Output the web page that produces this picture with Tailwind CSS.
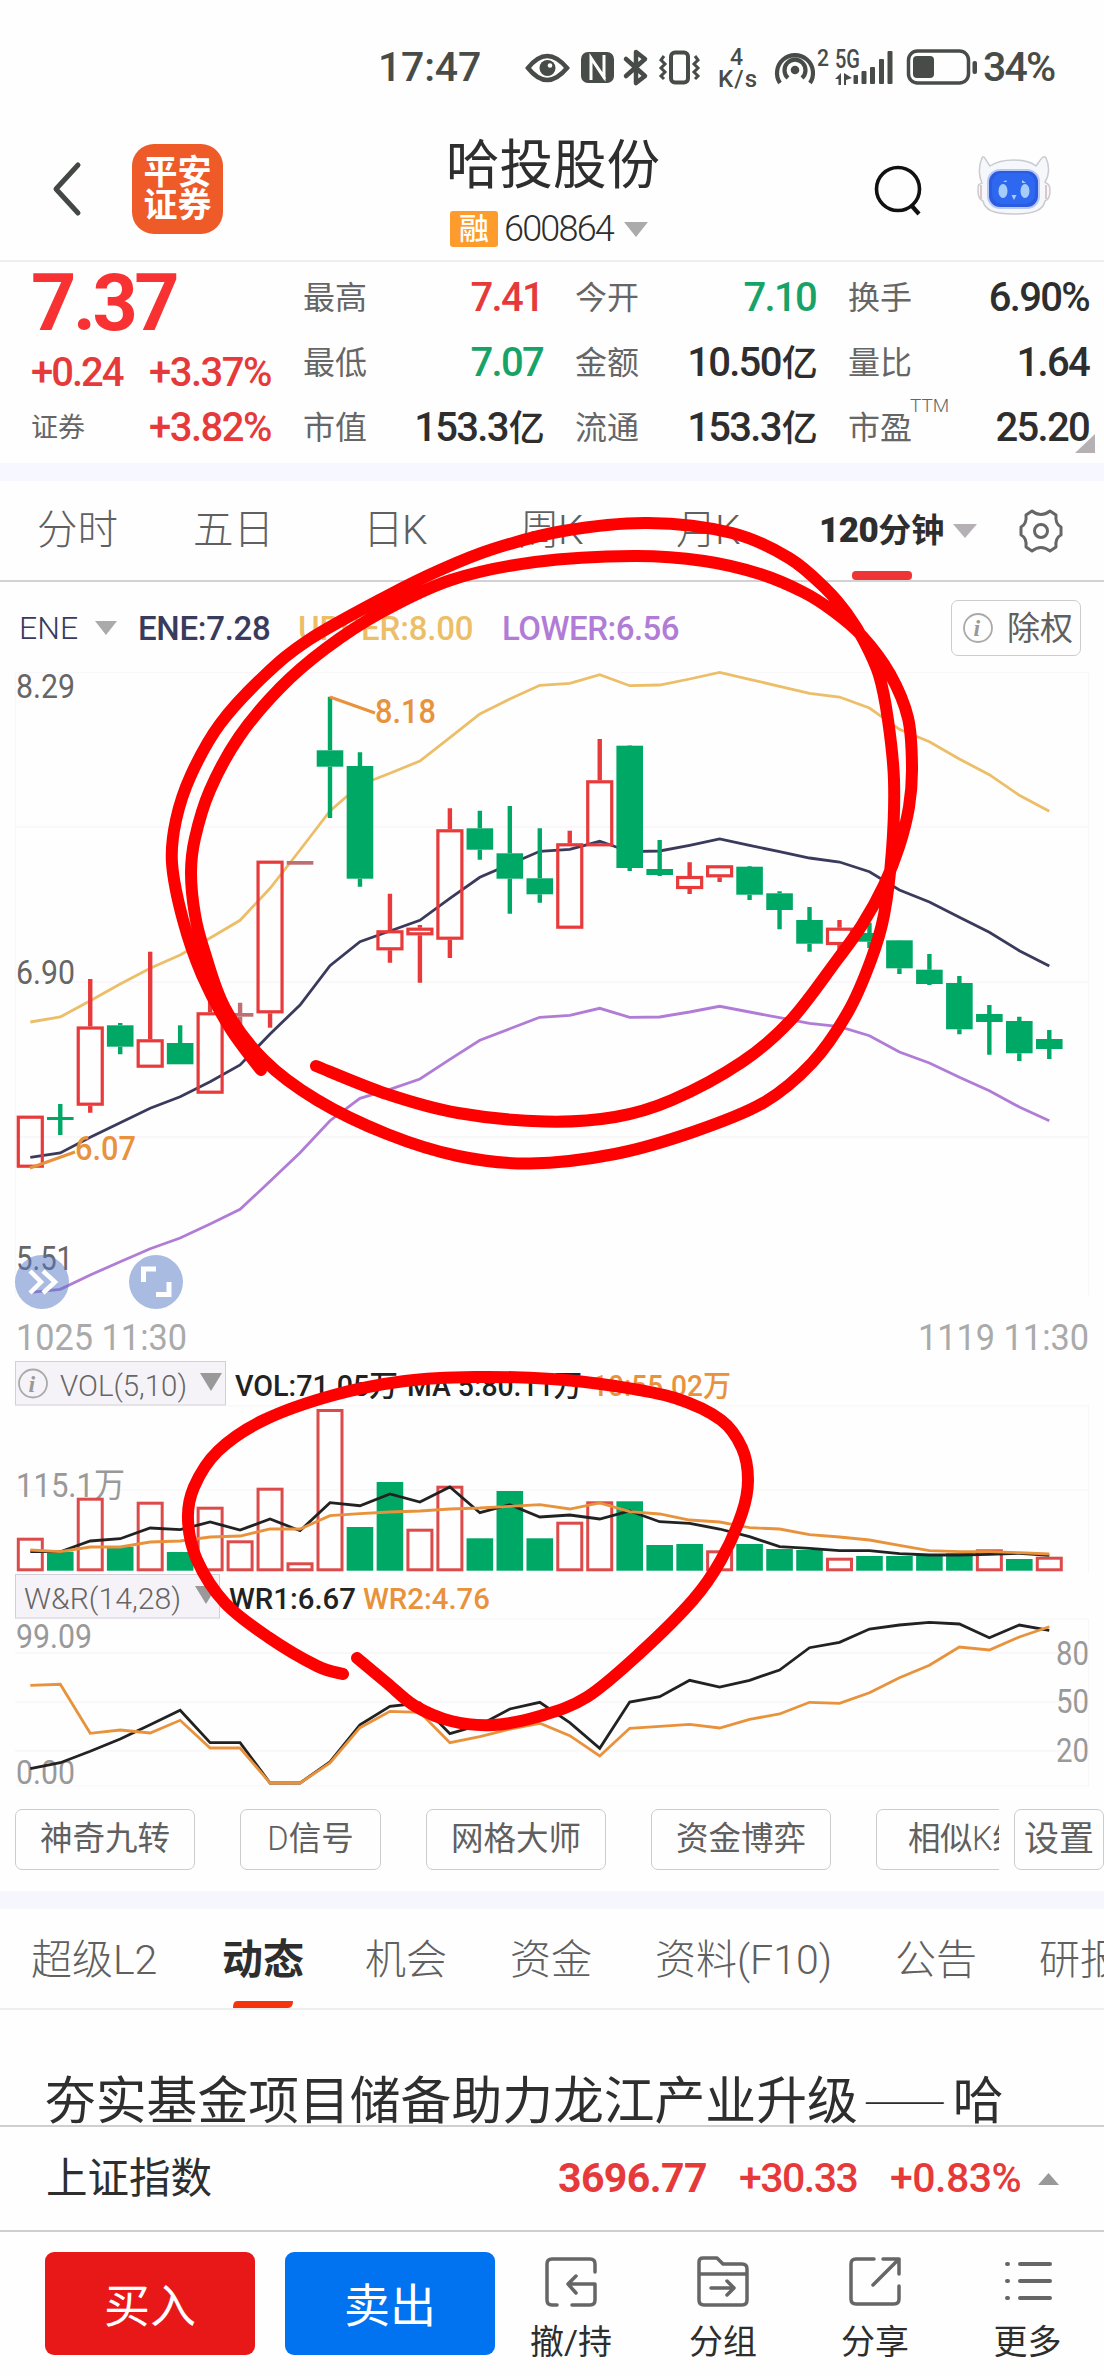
<!DOCTYPE html>
<html lang="zh-CN">
<head>
  <meta charset="UTF-8" />
  <meta name="viewport" content="width=device-width, initial-scale=1.0" />
  <title>哈投股份 600864</title>
  <script src="https://cdn.jsdelivr.net/npm/@tailwindcss/browser@4"></script>
</head>
<body class="bg-[#fefefe] text-[#2e2e2e] font-[Roboto,'Noto_Sans_CJK_SC',sans-serif] w-[1104px] h-[2376px] relative overflow-hidden flex flex-col leading-none whitespace-nowrap">

  <!-- status bar -->
  <div class="h-[134px] flex items-center pl-[378px] text-[#484c48] font-medium text-[41px] shrink-0">
    <span class="w-[142px] tracking-[-0.2px]">17:47</span>
    <svg class="w-[460px] h-[60px]" viewBox="520 36 460 60" fill="none" stroke="#484c48">
      <path d="M528 67Q547 43 567 67Q547 91 528 67Z" stroke-width="4.5"/>
      <circle cx="547.500" cy="67" r="8" fill="#484c48" stroke="none"/>
      <circle cx="550" cy="64.500" r="2.300" fill="#fff" stroke="none"/>
      <rect x="581" y="51" width="33" height="31" rx="7" fill="#484c48" stroke="none"/>
      <path d="M591 79V57l14 21M604 54v22L591 57" stroke="#fefefe" stroke-width="3"/>
      <path d="M626 58l19 17-9 7V51l9 7-19 17" stroke-width="4.500" stroke-linejoin="round" stroke-linecap="round"/>
      <rect x="671" y="51.500" width="17" height="30" rx="4" stroke-width="4"/>
      <path d="M664 55l-3 4 4 4-4 4 4 4-4 4 3 3M695 55l3 4-4 4 4 4-4 4 4 4-3 3" stroke-width="3"/>
      <path d="M780 82A18 18 0 1 1 810 82M788 77A10.500 10.500 0 1 1 802 77" stroke-width="4.200"/>
      <circle cx="795" cy="69" r="4.300" fill="#484c48" stroke="none"/>
      <g fill="#484c48" stroke="none" class="font-medium">
        <text x="730" y="64" font-size="23">4</text>
        <text x="718" y="86" font-size="24" textLength="39">K/s</text>
        <text x="817" y="65" font-size="23" textLength="12" lengthAdjust="spacingAndGlyphs">2</text>
        <text x="835" y="67" font-size="25" textLength="25" lengthAdjust="spacingAndGlyphs">5G</text>
        <path d="M835 78l6-6v12h-2.500v-6zM844 72v12h2v-5l6-2z"/>
        <rect x="853.500" y="74" width="4.500" height="9" rx="1"/>
        <rect x="861.500" y="70" width="5" height="13" rx="1"/>
        <rect x="870" y="66" width="5" height="17" rx="1"/>
        <rect x="879" y="58" width="5" height="25" rx="1"/>
        <rect x="887.500" y="50" width="5" height="33" rx="1"/>
        <rect x="913" y="55" width="21" height="22" rx="4"/>
        <rect x="972.500" y="60" width="4.500" height="13" rx="2"/>
      </g>
      <rect x="908.500" y="50" width="60" height="32" rx="9" stroke-width="3.500"/>
    </svg>
    <span class="ml-[3px] tracking-[-1.8px]">34%</span>
  </div>

  <!-- header -->
  <header class="h-[126px] flex shrink-0 relative">
    <svg class="w-[38px] h-[60px] ml-[49px] mt-[25px]" viewBox="0 0 38 60" fill="none" stroke="#444844" stroke-width="5" stroke-linecap="round" stroke-linejoin="round"><path d="M29 6L7 30L29 54"/></svg>
    <div class="ml-[45px] mt-[10px] w-[91px] h-[90px] rounded-[22px] bg-[#ee5a28] text-white font-bold text-[34px] leading-[33px] flex items-center justify-center text-center">平安<br>证券</div>
    <div class="ml-[195px] w-[270px] flex flex-col">
      <h1 class="text-[53.500px] leading-[60px] mt-[2px] pl-[28px]">哈投股份</h1>
      <div class="flex items-center h-9 mt-[15px] w-full pl-8">
        <span class="w-12 h-9 bg-[#fd9b2c] rounded-[3px] text-white text-[30px] font-medium flex items-center justify-center">融</span>
        <span class="ml-1.5 text-[36px] font-light tracking-[-1.800px]">600864</span>
        <svg class="ml-[11px] w-6 h-[15px]" viewBox="0 0 24 15"><path d="M0 0H24L12 15z" fill="#ababab"/></svg>
      </div>
    </div>
    <svg class="ml-[184px] mt-[29px] w-[52px] h-[56px] shrink-0" viewBox="872 163 52 56" fill="none" stroke="#111" stroke-width="3.600"><circle cx="898" cy="189" r="21.500"/><path d="M911 205l8 9" stroke-width="4.200"/></svg>
    <svg class="ml-[52px] mt-[18px] w-[76px] h-[66px] shrink-0" viewBox="976 152 76 66">
      <path d="M982 158c2-4 4 3 8 8 12-8 36-8 46 0 4-5 7-12 10-8 4 8 3 18-1 24l1 1c3 1 4 3 4 7s-1 10-5 11c-2 9-10 13-31 13s-29-4-31-13c-4-1-5-5-5-11s1-6 4-7c-3-6-4-16 0-25z" fill="#f6f7fa" stroke="#c9cbd2" stroke-width="1.500"/>
      <path d="M981 185v14M1046 185v14" stroke="#dcc6c8" stroke-width="2"/>
      <rect x="988" y="170" width="51" height="38" rx="12" fill="#2a5be0" stroke="#b8c9f5" stroke-width="2"/>
      <rect x="992" y="173" width="43" height="31" rx="10" fill="#2f68f0"/>
      <g fill="#a5cdf8"><ellipse cx="1003" cy="191" rx="4.500" ry="7"/><ellipse cx="1025" cy="191" rx="4.500" ry="7"/><path d="M1011.500 195h5l-2.500 5zM1003 182l3-2 1 2zM1022 180l4 3h-4z"/></g>
    </svg>
  </header>

  <!-- quote summary -->
  <section class="h-[203px] border-t-2 border-[#eeeeee] flex pl-[31px] pr-[15px] text-[40px] font-medium tracking-[-1.700px] shrink-0">
    <div class="w-[272px] shrink-0">
      <div class="text-[79px] font-bold text-[#f83232] tracking-[-3.400px] h-[81px] leading-[82px]">7.37</div>
      <div class="flex h-[56px] items-center text-[#e63a3a] mt-[2px] tracking-[-1.500px]"><span class="w-[118px] tracking-[-2px]">+0.24</span><span>+3.37%</span></div>
      <div class="flex h-[54px] items-center text-[#e63a3a] tracking-[-1.500px]"><span class="w-[118px] text-[#666] text-[27px] font-normal tracking-normal">证券</span><span>+3.82%</span></div>
    </div>
    <div id="stats" class="flex-1 grid grid-cols-[240px_241px_241px] gap-x-8 auto-rows-[65px] pt-[3px]"></div>
  </section>

  <div class="h-[18px] bg-[#f6f7ff] shrink-0"></div>

  <!-- period tabs -->
  <nav class="h-[101px] border-b-2 border-[#d2d2d2] flex items-center text-[40.500px] text-[#606060] font-light pl-[37px] shrink-0 relative">
    <span class="w-[156px]">分时</span>
    <span class="w-[170px]">五日</span>
    <span class="w-[156px] tracking-[-1.500px]">日K</span>
    <span class="w-[157px] tracking-[-1.500px]">周K</span>
    <span class="w-[143px] tracking-[-1.500px]">月K</span>
    <span class="text-[33px] font-bold text-[#2e2e2e] w-[134px]"><b class="text-[35px] tracking-[-0.500px]">120</b>分钟</span>
    <svg class="w-6 h-[14px]" viewBox="0 0 24 14"><path d="M0 0H24L12 14z" fill="#b4b0b4"/></svg>
    <svg class="ml-[42px] w-[44px] h-[46px]" viewBox="-22 -23 44 46" fill="none" stroke="#666" stroke-width="3" stroke-linejoin="round"><path d="M-9 -20Q0 -13 9 -20L15 -16Q14 -7 20 -4V4Q14 7 15 16L9 20Q0 13 -9 20L-15 16Q-14 7 -20 4V-4Q-14 -7 -15 -16Z"/><circle r="6.500"/></svg>
    <i class="absolute left-[852px] bottom-0 w-[60px] h-[9px] rounded-[4px] bg-[#ee3434]"></i>
  </nav>

  <!-- ENE indicator head -->
  <div class="h-[92px] flex items-center text-[33px] font-medium pl-[19px] pr-[23px] shrink-0">
    <span class="text-[32px] font-light text-[#3a3a5c] w-[76px]">ENE</span>
    <svg class="w-[22px] h-[14px] mr-[21px]" viewBox="0 0 22 14"><path d="M0 0H22L11 14z" fill="#aaa"/></svg>
    <span class="text-[#3a3a5c] w-[160px] tracking-[-0.300px]">ENE:7.28</span>
    <span class="text-[#ecbe68] w-[204px] tracking-[-0.200px]">UPPER:8.00</span>
    <span class="text-[#b07cd6] tracking-[-0.500px]">LOWER:6.56</span>
    <div class="ml-auto w-[130px] h-[56px] border-[1.500px] border-[#ccc] rounded-[7px] flex items-center pl-[10px] gap-[13px] text-[#606060] text-[33px] font-normal">
      <svg class="w-8 h-8" viewBox="0 0 32 32" fill="none" stroke="#aaa" stroke-width="1.800"><circle cx="16" cy="16" r="14"/><text x="11.500" y="24" font-size="24" fill="#999" stroke="none" class="font-['Liberation_Serif'] italic font-bold">i</text></svg>
      <span>除权</span>
    </div>
  </div>

  <!-- price / volume / W&R charts share one canvas -->
  <svg id="chart" class="w-[1104px] h-[1120px] shrink-0 overflow-visible" viewBox="0 674 1104 1120" fill="none"></svg>

  <!-- tool chips -->
  <div class="h-[97px] flex text-[32.500px] text-[#606060] pl-[15px] pt-[15px] shrink-0">
    <div class="flex gap-[45px] w-[984px] shrink-0 overflow-hidden *:h-[61px] *:border-[1.500px] *:border-[#ccc] *:rounded-[7px] *:flex *:items-center *:justify-center *:shrink-0">
      <span class="w-[180px]">神奇九转</span>
      <span class="w-[141px]"><b class="font-light">D</b>信号</span>
      <span class="w-[180px]">网格大师</span>
      <span class="w-[180px]">资金博弈</span>
      <span class="w-[180px] tracking-[-0.500px]">相似<b class="font-light">K</b>线</span>
    </div>
    <span class="ml-[15px] w-[90px] h-[61px] border-[1.500px] border-[#ccc] rounded-[7px] flex items-center justify-center text-[35px] shrink-0">设置</span>
  </div>

  <div class="h-[18px] bg-[#f6f7fd] shrink-0"></div>

  <!-- info tabs -->
  <nav class="h-[101px] border-b-2 border-[#eee] flex items-center text-[41px] text-[#606060] font-light pl-[31px] pt-1 relative shrink-0 *:shrink-0">
    <span class="w-[191px]">超级L2</span>
    <span class="w-[143px] font-bold text-[#2e2e2e]">动态</span>
    <span class="w-[145px]">机会</span>
    <span class="w-[145px]">资金</span>
    <span class="w-[240px]">资料(F10)</span>
    <span class="w-[144px]">公告</span>
    <span>研报</span>
    <svg class="absolute left-[233px] bottom-0 w-[60px] h-[7px]" viewBox="0 0 60 7"><path d="M4 0H60Q60 7 55 7H0Q0 0 4 0z" fill="#f5330e"/></svg>
  </nav>

  <!-- news headline -->
  <div class="h-[115px] pl-[45px] pt-[62px] text-[50.800px] leading-[58px] shrink-0 overflow-hidden">夯实基金项目储备助力龙江产业升级<span class="font-['Noto_Sans_CJK_SC'] text-[42px] tracking-[4px] ml-[5px] mr-[2px]">——</span>哈</div>

  <!-- index bar -->
  <div class="h-[107px] border-y-2 border-[#cfcfcf] flex items-center pl-[46px] pr-[45px] text-[41px] text-[#e63a3a] font-medium shrink-0">
    <span class="text-[#2e2e2e] text-[41.500px] font-normal mr-auto">上证指数</span>
    <span class="font-bold tracking-[-0.600px] w-[181px]">3696.77</span>
    <span class="tracking-[-1.500px] w-[151px]">+30.33</span>
    <span class="tracking-[-0.500px] w-[148px]">+0.83%</span>
    <svg class="w-[21px] h-3" viewBox="0 0 21 12"><path d="M10.500 0L21 12H0z" fill="#999"/></svg>
  </div>

  <!-- bottom actions -->
  <footer class="flex-1 flex pl-[45px] pt-[20px] text-[34px]">
    <button class="w-[210px] h-[103px] rounded-[9px] bg-[#e91818] text-white text-[46px] pt-1">买入</button>
    <button class="ml-[30px] w-[210px] h-[103px] rounded-[9px] bg-[#0173f0] text-white text-[46px] pt-1">卖出</button>
    <div class="flex-1 flex pt-0.5 *:flex *:flex-col *:items-center *:gap-[17px]">
      <div class="w-[152px]">
        <svg class="w-[54px] h-[54px]" viewBox="0 0 54 54" fill="none" stroke="#666" stroke-width="3.500" stroke-linecap="round" stroke-linejoin="round"><path d="M51 18V10Q51 5 46 5H8Q3 5 3 10V46Q3 51 8 51H13M28 51H46Q51 51 51 46V30H24M32 22L24 30L32 39"/></svg>
        <span>撤/持</span>
      </div>
      <div class="w-[152px]">
        <svg class="w-[54px] h-[54px]" viewBox="0 0 54 54" fill="none" stroke="#666" stroke-width="3.500" stroke-linecap="round" stroke-linejoin="round"><path d="M3 20V8Q3 4 7 4H21L27 10H46Q51 10 51 15V46Q51 51 46 51H8Q3 51 3 46V20H51M15 34H38M31 27L38 34L31 41"/></svg>
        <span>分组</span>
      </div>
      <div class="w-[152px]">
        <svg class="w-[54px] h-[54px]" viewBox="0 0 54 54" fill="none" stroke="#666" stroke-width="3.500" stroke-linecap="round" stroke-linejoin="round"><path d="M26 5H8Q3 5 3 10V45Q3 50 8 50H46Q51 50 51 45V32M35 5H51V20M51 5L25 31"/></svg>
        <span>分享</span>
      </div>
      <div class="w-[153px]">
        <svg class="w-[54px] h-[54px]" viewBox="0 0 54 54" fill="none" stroke="#666" stroke-width="4" stroke-linecap="round"><path d="M6 10H7M19 10H49M6 27H7M19 27H49M6 44H7M19 44H49"/></svg>
        <span>更多</span>
      </div>
    </div>
  </footer>

  <svg class="absolute left-[1075px] top-[434px] w-5 h-[19px]" viewBox="0 0 20 19"><path d="M20 0V19H0z" fill="#b4b0b4"/></svg>

  <!-- hand-drawn marks over everything -->
  <svg id="marks" class="absolute inset-0 w-[1104px] h-[2376px]" viewBox="0 0 1104 2376" fill="none" stroke="#ff0000" stroke-width="12" stroke-linecap="round" stroke-linejoin="round"></svg>

  <script>
    const RED = '#e83a3a', GREEN = '#00a866';

    const stats = [
      ['最高', '7.41', 'text-[#e63a3a]'], ['今开', '7.10', 'text-[#17a368]'], ['换手', '6.90%', ''],
      ['最低', '7.07', 'text-[#17a368]'], ['金额', '10.50亿', ''], ['量比', '1.64', ''],
      ['市值', '153.3亿', ''], ['流通', '153.3亿', ''], ['市盈', '25.20', '']
    ];
    document.getElementById('stats').innerHTML = stats.map(([label, value, color]) => `
      <div class="flex items-center justify-between">
        <span class="text-[32px] font-normal text-[#666] tracking-normal relative">${label}${label === '市盈' ? '<sup class="absolute left-[62px] -top-[16px] text-[19px] leading-none font-light">TTM</sup>' : ''}</span>
        <span class="${color}">${value.replace('亿', '<span class="text-[36px] ml-px">亿</span>')}</span>
      </div>`).join('');

    const x = (i) => 30.3 + 29.97 * i;

    // [high, body top, body bottom, low, colour]
    const candles = [
      [1115.7, 1115.7, 1167.7, 1167.7, 'r'], [1104, 1117, 1120, 1135, 'g'], [979, 1026.5, 1105.7, 1112.7, 'r'],
      [1023, 1025.3, 1046.7, 1054.3, 'g'], [951.7, 1039.3, 1067.7, 1067.7, 'r'], [1025.3, 1043, 1064.3, 1064.3, 'g'],
      [1000, 1012.3, 1093.7, 1093.7, 'r'], [1002.7, 1013, 1016.7, 1032, 'x'], [860.7, 860.7, 1013.3, 1027.7, 'r'],
      [861, 861, 864.7, 864.7, 'x'], [696.7, 750.3, 766.7, 818, 'g'], [752.3, 766, 878.7, 886.7, 'g'],
      [893.7, 930.3, 950.3, 962.7, 'r'], [925, 927.7, 935.3, 982.7, 'r'], [808.3, 829.3, 939.7, 958, 'r'],
      [810.7, 828.3, 849.7, 859.7, 'g'], [806, 853.3, 878.7, 913.7, 'g'], [828.3, 878.3, 894.3, 902.7, 'g'],
      [830.7, 843.3, 928.7, 928.7, 'r'], [739, 780.3, 846.3, 846.3, 'r'], [745.3, 745.7, 868, 871, 'g'],
      [840, 869, 875, 876, 'g'], [862.3, 876, 889, 894, 'r'], [865.3, 865.3, 877.3, 882, 'r'],
      [866, 866.7, 894.7, 900, 'g'], [891.3, 893.3, 910, 929.3, 'g'], [907, 920, 943.7, 951.7, 'g'],
      [920, 927.7, 945, 950, 'r'], [922.7, 933, 941.7, 948, 'g'], [940, 940.3, 968.3, 974, 'g'],
      [954, 969.7, 984, 985, 'g'], [976, 983, 1029.3, 1034.3, 'g'], [1005, 1014, 1022, 1054.7, 'g'],
      [1016.7, 1021, 1053.3, 1061, 'g'], [1030, 1039, 1049, 1059, 'g']
    ];
    const ene = [1157.3, 1153, 1137.3, 1122.7, 1108.3, 1096.7, 1081.7, 1065, 1034, 1005, 965.7, 941.7, 931, 920.3, 898.3, 877.3, 864.3, 851.3, 849.3, 841.3, 851.7, 851, 845.3, 839, 845.3, 851.7, 858, 862, 871.7, 890, 902, 917.3, 932.3, 950.7, 966];
    const upper = [1022, 1017, 1000.7, 984, 968.2, 955, 938, 920.3, 888.3, 850, 811, 785, 773.3, 761, 737.7, 714, 699, 685.3, 683.3, 674.7, 685.7, 685, 679, 672.5, 679.3, 686.3, 693.3, 697, 708, 729.3, 741.7, 759, 774.7, 795.3, 811.3];
    const lower = [1292.3, 1289.3, 1275, 1261.7, 1248.7, 1238, 1224, 1209.3, 1181.3, 1152.7, 1120.7, 1098.3, 1089.3, 1079, 1059.3, 1040.3, 1028.7, 1017.3, 1015.3, 1008.3, 1017.3, 1017, 1012, 1006.3, 1012, 1017.7, 1023.3, 1026.7, 1035.7, 1052, 1063, 1077.3, 1090.7, 1107, 1120.7];

    const volumes = [1537.7, 1551.7, 1497.7, 1546.7, 1501.7, 1552, 1506.7, 1540.3, 1487.7, 1562.3, 1409, 1527, 1482, 1528.7, 1485.7, 1538.3, 1491, 1538.3, 1521.7, 1501.3, 1501.3, 1545, 1544, 1550.3, 1544, 1549, 1550, 1557.7, 1556, 1556, 1555, 1553.3, 1549.3, 1559, 1556.7];
    const volColors = 'rgrgrgrrrrrggrrgggrrgggrgggrggggrgr';
    const ma5 = [1551.7, 1551.7, 1541, 1538.7, 1528, 1529.7, 1522, 1530, 1519, 1530.7, 1502.7, 1505.7, 1494, 1502, 1487, 1512.7, 1504.7, 1517, 1515, 1519, 1511, 1521.7, 1523.3, 1529, 1536.7, 1546.7, 1548.3, 1550.7, 1550.7, 1553.7, 1555, 1555, 1554.3, 1553.3, 1555.3];
    const ma10 = [1550, 1551.7, 1547, 1547, 1542, 1541, 1537, 1536, 1529, 1529, 1515.7, 1513.7, 1512, 1511, 1509, 1508, 1506.3, 1504.7, 1509, 1503, 1511.7, 1514, 1520, 1522, 1527.7, 1529, 1534.7, 1537, 1540, 1545.3, 1550.7, 1551.7, 1551.7, 1552.7, 1554];

    const wr1 = [1768.7, 1762.7, 1751.3, 1739, 1724.7, 1710.3, 1742.7, 1742.7, 1783, 1783, 1762, 1724.7, 1706.3, 1703, 1733.7, 1725, 1709, 1702.3, 1722.7, 1748.3, 1702, 1696.7, 1680.3, 1687, 1680.3, 1670, 1647.7, 1642.3, 1629, 1625, 1622.3, 1624, 1637.7, 1625, 1630.3];
    const wr2 = [1685.3, 1684.3, 1733.3, 1730, 1733, 1720.3, 1748, 1748, 1783, 1783, 1763, 1727.7, 1711.3, 1712.3, 1742.7, 1736.7, 1729, 1723.3, 1735.7, 1756, 1728.3, 1726.3, 1724.3, 1728, 1719.3, 1714, 1702.3, 1703.3, 1692.7, 1677.7, 1665.3, 1647, 1650, 1637, 1626.7];

    const poly = (ys, color) => `<polyline points="${ys.map((y, i) => `${x(i)},${y}`).join(' ')}" stroke="${color}" stroke-width="2.8"/>`;
    const rule = (y, color = '#f5f1f5') => `<path d="M15 ${y}H1089" stroke="${color}" stroke-width="1"/>`;
    const label = (tx, y, text, w, size, color, weight = 400) =>
      `<text x="${tx}" y="${y}" font-size="${size}" font-weight="${weight}" fill="${color}" textLength="${w}" lengthAdjust="spacingAndGlyphs">${text}</text>`;

    const candle = ([hi, top, bot, lo, c], i) => {
      const cx = x(i);
      const color = { r: RED, g: GREEN, x: '#bd6f72' }[c];
      const wicks = `<path d="M${cx} ${hi}V${top}M${cx} ${bot}V${lo}" stroke="${color}" stroke-width="4.4"/>`;
      const body = c === 'r'
        ? `<rect x="${cx - 12}" y="${top + 1.5}" width="24" height="${bot - top - 3}" stroke="${color}" stroke-width="3.2"/>`
        : `<rect x="${cx - 13.3}" y="${top}" width="26.6" height="${bot - top}" fill="${color}"/>`;
      return wicks + body;
    };
    const volBar = (top, i) => volColors[i] === 'r'
      ? `<rect x="${x(i) - 12}" y="${top + 1.5}" width="24" height="${1569.3 - top - 1}" stroke="#dc4a4a" stroke-width="3"/>`
      : `<rect x="${x(i) - 13.3}" y="${top}" width="26.6" height="${1570.7 - top}" fill="${GREEN}"/>`;

    document.getElementById('chart').innerHTML = [
      rule(672.5, '#f8f7f9'), rule(827), rule(982), rule(1137), rule(1490, '#f7f6f8'), rule(1406, '#f8f7f9'), rule(1619, '#f8f7f9'), rule(1653), rule(1702), rule(1751), rule(1786, '#f8f7f9'),
      '<path d="M15.500 674V1295M1088.500 674V1295M1088.500 1406V1573M1088.500 1619V1786" stroke="#f8f6f9"/>',
      poly(ene, '#3a3a5c'), poly(upper, '#ecbe68'), poly(lower, '#b07cd6'),
      candles.map(candle).join(''),
      label(16, 698, '8.29', 59, 34, '#666'), label(16, 984, '6.90', 59, 34, '#666'), label(16, 1270, '5.51', 57, 34, '#666'),
      '<path d="M330 697L375 713M30 1168L75 1152" stroke="#e8923c" stroke-width="3"/>',
      label(375, 723, '8.18', 61, 34, '#e8923c', 500), label(75, 1160, '6.07', 61, 34, '#e8923c', 500),
      '<circle cx="42" cy="1282" r="27" fill="#5477c4" fill-opacity=".5"/><path d="M30 1271l11 11-11 11M43 1271l12 11-12 11" stroke="#fff" stroke-width="4.5"/>',
      '<circle cx="156" cy="1282" r="27" fill="#5477c4" fill-opacity=".5"/><path d="M143.500 1282V1269H156M156 1294.500H169V1282" stroke="#fff" stroke-width="5"/>',
      label(16, 1350, '1025 11:30', 171, 36, '#aaa'), label(918, 1350, '1119 11:30', 171, 36, '#aaa'),

      '<rect x="15.500" y="1361.500" width="210" height="43.500" fill="#f6f3f8" stroke="#d3cfd8"/>',
      '<circle cx="33" cy="1383.500" r="14" stroke="#aaa" stroke-width="1.8"/><text x="28.500" y="1392" font-size="24" fill="#999" class="font-[\'Liberation_Serif\'] italic font-bold">i</text>',
      label(60, 1396, 'VOL(5,10)', 127, 30, '#666', 300), '<path d="M200 1373H222L211 1391z" fill="#999"/>',
      label(235, 1396, 'VOL:71.05万', 163, 30, '#222', 500), label(407, 1396, 'MA 5:80.11万', 175, 30, '#222', 500), label(592, 1396, '10:55.02万', 139, 30, '#e8923c', 500),
      label(16, 1497, '115.1万', 109, 34, '#999'),
      volumes.map(volBar).join(''), poly(ma5, '#222'), poly(ma10, '#e8923c'),

      '<rect x="15.500" y="1574.500" width="204" height="43.500" fill="#f6f3f8" stroke="#d3cfd8"/>',
      label(24, 1609, 'W&amp;R(14,28)', 157, 30, '#666', 300), '<path d="M195 1586H217L206 1604z" fill="#999"/>',
      label(229, 1609, 'WR1:6.67', 127, 30, '#222', 500), label(363, 1609, 'WR2:4.76', 127, 30, '#e8923c', 500),
      label(16, 1648, '99.09', 76, 34, '#999'), label(16, 1784, '0.00', 59, 34, '#999'),
      poly(wr1, '#222'), poly(wr2, '#e8923c'),
      label(1056, 1665, '80', 33, 34, '#999'), label(1056, 1713, '50', 33, 34, '#999'), label(1056, 1762, '20', 33, 34, '#999')
    ].join('');

    // smooth curve through the pen points
    const smooth = (p) => {
      let d = `M${p[0]}`;
      for (let i = 0; i < p.length - 1; i++) {
        const a = p[i - 1] || p[i], b = p[i], c = p[i + 1], e = p[i + 2] || c;
        d += `C${b[0] + (c[0] - a[0]) / 6} ${b[1] + (c[1] - a[1]) / 6} ${c[0] - (e[0] - b[0]) / 6} ${c[1] - (e[1] - b[1]) / 6} ${c[0]} ${c[1]}`;
      }
      return `<path d="${d}"/>`;
    };
    const pens = [
      [[261, 1070], [230, 1028], [202, 975], [183, 920], [172, 863], [176, 820], [191, 775], [220, 724], [264, 676], [310, 639], [387, 596], [440, 570], [493, 549], [563, 531], [648, 523], [732, 533], [789, 558], [827, 590], [848, 615], [864, 641], [879, 675], [888, 720], [894, 780], [892, 850], [884, 915], [871, 960], [848, 1012], [812, 1063], [763, 1103], [693, 1132], [615, 1154], [530, 1163.5], [458, 1156], [387, 1134], [317, 1100], [264, 1060], [225, 1008], [204, 950], [195, 915], [191, 873], [195, 838], [210, 790], [239, 737], [280, 688], [325, 649], [380, 613], [451, 580], [535, 562], [634, 556], [704, 561], [760, 574], [803, 592], [833, 611], [862, 636], [890, 674], [908, 718], [912, 767], [909, 807], [899, 847], [884, 885], [862, 925], [837, 960], [791, 1020], [742, 1062], [672, 1100], [615, 1117], [545, 1121.5], [458, 1113], [387, 1094], [316, 1066]],
      [[357, 1658], [387, 1683], [415, 1706], [451, 1721], [493, 1725], [540, 1716], [587, 1697], [640, 1653], [693, 1600], [721, 1560], [742, 1513], [748, 1480], [742, 1448], [721, 1420], [675, 1398], [615, 1386], [552, 1379], [475, 1377], [405, 1381], [334, 1395], [264, 1420], [218, 1451], [194, 1487], [188, 1520], [197, 1560], [225, 1603], [268, 1637], [317, 1666], [343, 1674]]
    ];
    document.getElementById('marks').innerHTML = pens.map(smooth).join('');
  </script>
</body>
</html>
